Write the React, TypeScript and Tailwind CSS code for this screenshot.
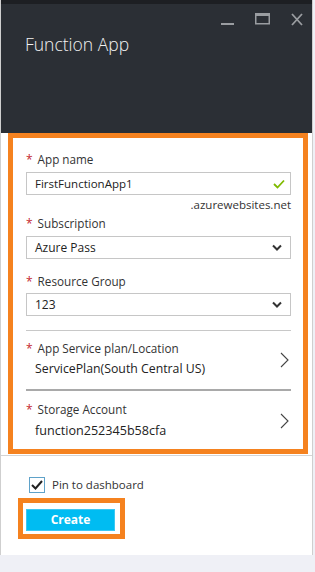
import React from 'react';

const font = { fontFamily: '"Open Sans", "Noto Sans", sans-serif' };

const Star = () => <span className="text-[#c4262e] mr-[5px] text-[12px]">*</span>;

const Chevron = () => (
  <svg width="10" height="7" viewBox="0 0 10 7" className="text-[#333]">
    <path d="M1 1.5 L5 5.5 L9 1.5" fill="none" stroke="currentColor" strokeWidth="2" />
  </svg>
);

const Arrow = () => (
  <svg width="9" height="16" viewBox="0 0 9 16" className="text-[#444]">
    <path d="M1 1 L8 8 L1 15" fill="none" stroke="currentColor" strokeWidth="1.1" />
  </svg>
);

const Label: React.FC<{ text: string }> = ({ text }) => (
  <div className="flex items-center h-[16px] text-[11.7px] text-[#333] leading-none">
    <Star />
    <span>{text}</span>
  </div>
);

const SelectBox: React.FC<{ value: string }> = ({ value }) => (
  <div className="h-[23px] border border-[#c6c6c6] flex items-center justify-between pl-[8px] pr-[8px] text-[12px] text-[#222]">
    <span>{value}</span>
    <Chevron />
  </div>
);

const App: React.FC = () => {
  return (
    <div className="w-[315px] h-[572px] bg-[#eff0f6] overflow-hidden" style={font}>
      <div className="w-[313px] h-[555px] bg-white border-l border-r border-[#cfcfcf] flex flex-col">
        {/* header */}
        <div className="h-[133px] bg-[#2b2f35] flex flex-col">
          <div className="h-[4px] bg-[#1d1f23]" />
          <div className="flex justify-end items-start gap-[21px] pr-[9px] pt-[9px] h-[26px]">
            <svg width="13" height="14" viewBox="0 0 13 14">
              <rect x="0" y="10" width="13" height="2" fill="#9a9da1" />
            </svg>
            <svg width="15" height="12" viewBox="0 0 15 12">
              <rect x="0.75" y="0.75" width="13.5" height="10" fill="none" stroke="#9a9da1" strokeWidth="1.5" />
              <rect x="0" y="0" width="15" height="3" fill="#9a9da1" />
            </svg>
            <svg width="12" height="13" viewBox="0 0 12 13">
              <path d="M1 1 L11 12 M11 1 L1 12" stroke="#9a9da1" strokeWidth="1.8" />
            </svg>
          </div>
          <div className="pl-[24px] pt-[1px] text-[17.5px] text-[#f2f2f2] font-light leading-[26px]">Function App</div>
        </div>

        {/* form */}
        <div className="ml-[7px] mr-[4px] border-[5px] border-[#f5821f] h-[321px] pl-[13px] pr-[12px] pt-[14px] flex flex-col">
          <Label text="App name" />
          <div className="mt-[4px] h-[23px] border border-[#c6c6c6] flex items-center justify-between pl-[8px] pr-[5px] text-[11.5px] text-[#222]">
            <span>FirstFunctionApp1</span>
            <svg width="12" height="10" viewBox="0 0 12 10">
              <path d="M1 5 L4.5 8.5 L11 1.5" fill="none" stroke="#7fba00" strokeWidth="1.8" />
            </svg>
          </div>
          <div className="text-right text-[11.5px] text-[#333] leading-[16px] mt-[2px]">.azurewebsites.net</div>
          <div className="mt-[3px]">
            <Label text="Subscription" />
          </div>
          <div className="mt-[4px]">
            <SelectBox value="Azure Pass" />
          </div>
          <div className="mt-[15px]">
            <Label text="Resource Group" />
          </div>
          <div className="mt-[3px]">
            <SelectBox value="123" />
          </div>
          <div className="mt-[14px] border-t border-[#c8c8c8]" />
          <div className="flex items-center justify-between pt-[10px] pb-[11px]">
            <div className="flex flex-col">
              <Label text="App Service plan/Location" />
              <div className="text-[12.3px] text-[#222] leading-[19px] pl-[9px] mt-[2px]">ServicePlan(South Central US)</div>
            </div>
            <div className="pr-[2px]"><Arrow /></div>
          </div>
          <div className="border-t-2 border-[#a9a9a9]" />
          <div className="flex items-center justify-between pt-[11px]">
            <div className="flex flex-col">
              <Label text="Storage Account" />
              <div className="text-[12.6px] text-[#222] leading-[19px] pl-[9px] mt-[3px]">function252345b58cfa</div>
            </div>
            <div className="pr-[2px]"><Arrow /></div>
          </div>
        </div>

        {/* footer */}
        <div className="mt-[1px] border-t border-[#d4d4d4] flex-1 flex flex-col pl-[17px] pt-[20px]">
          <div className="flex items-center pl-[11px]">
            <div className="w-[16px] h-[16px] border border-[#5fa2c9] flex items-center justify-center">
              <svg width="12" height="10" viewBox="0 0 12 10">
                <path d="M1 5 L4.5 8.5 L11 1" fill="none" stroke="#222" strokeWidth="2" />
              </svg>
            </div>
            <span className="ml-[7px] text-[11.5px] text-[#333]">Pin to dashboard</span>
          </div>
          <div className="mt-[5px] w-[107px] h-[41px] border-[5px] border-[#f5821f] p-[3px] pt-[6px]">
            <div className="h-[22px] w-[89px] bg-[#00bcf2] border border-[#3cc8f2] flex items-center justify-center text-white text-[12px] font-bold">
              Create
            </div>
          </div>
        </div>
      </div>
    </div>
  );
};

export default App;
